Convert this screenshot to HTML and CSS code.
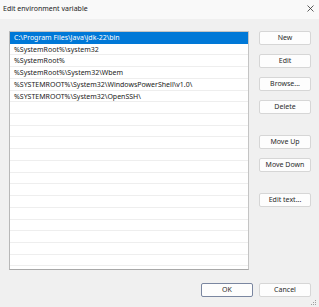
FILE: index.html
```html
<!DOCTYPE html>
<html lang="en">
<head>
    <meta charset="UTF-8">
    <title>Edit environment variable</title>
    <link rel="stylesheet" href="styles.css">
</head>
<body>
    <div class="dialog">
        <div class="titlebar">
            <span class="title">Edit environment variable</span>
            <svg class="close" width="7" height="7" viewBox="0 0 7 7">
                <path d="M0.5 0.5 L6.5 6.5 M6.5 0.5 L0.5 6.5" stroke="#333" stroke-width="0.8" fill="none"/>
            </svg>
        </div>

        <div class="content">
            <div class="main">
                <div class="path-list">
                    <div class="row selected">C:\Program Files\Java\jdk-22\bin</div>
                    <div class="row">%SystemRoot%\system32</div>
                    <div class="row">%SystemRoot%</div>
                    <div class="row">%SystemRoot%\System32\Wbem</div>
                    <div class="row">%SYSTEMROOT%\System32\WindowsPowerShell\v1.0\</div>
                    <div class="row">%SYSTEMROOT%\System32\OpenSSH\</div>
                    <div class="row"></div>
                    <div class="row"></div>
                    <div class="row"></div>
                    <div class="row"></div>
                    <div class="row"></div>
                    <div class="row"></div>
                    <div class="row"></div>
                    <div class="row"></div>
                    <div class="row"></div>
                    <div class="row"></div>
                    <div class="row"></div>
                    <div class="row"></div>
                    <div class="row"></div>
                    <div class="row"></div>
                </div>

                <div class="side-buttons">
                    <button class="btn">New</button>
                    <button class="btn">Edit</button>
                    <button class="btn">Browse...</button>
                    <button class="btn">Delete</button>
                    <button class="btn group-start">Move Up</button>
                    <button class="btn">Move Down</button>
                    <button class="btn group-start">Edit text...</button>
                </div>
            </div>

            <div class="footer">
                <button class="btn default">OK</button>
                <button class="btn">Cancel</button>
            </div>
        </div>

        <svg class="grip" width="6" height="6" viewBox="0 0 6 6">
            <rect x="4" y="0" width="1" height="1" fill="#a0a0a0"/>
            <rect x="2" y="2" width="1" height="1" fill="#a0a0a0"/>
            <rect x="4" y="2" width="1" height="1" fill="#a0a0a0"/>
            <rect x="0" y="4" width="1" height="1" fill="#a0a0a0"/>
            <rect x="2" y="4" width="1" height="1" fill="#a0a0a0"/>
            <rect x="4" y="4" width="1" height="1" fill="#a0a0a0"/>
        </svg>
    </div>
</body>
</html>
```

FILE: styles.css
```css
* {
    box-sizing: border-box;
}

body {
    margin: 0;
    background: #f0f0f0;
    font-family: "Noto Sans", "Open Sans", sans-serif;
    font-size: 7px;
    color: #1a1a1a;
}

.dialog {
    position: relative;
    width: 319px;
    height: 307px;
    background: #f0f0f0;
}

.titlebar {
    height: 19px;
    background: #f9f9f9;
    display: flex;
    align-items: center;
    justify-content: space-between;
    padding: 0 4px 2px 3px;
}

.title {
    font-size: 7px;
    color: #222;
}

.close {
    margin-right: 1px;
}

.content {
    padding: 12px 8px 0 9px;
}

.main {
    display: flex;
    gap: 10px;
}

.path-list {
    width: 240px;
    height: 239px;
    background: #fff;
    border: 1px solid #c4c4c4;
    border-left-color: #b8b8b8;
    border-bottom-color: #a8a8a8;
    overflow: hidden;
}

.row {
    height: 11.72px;
    line-height: 11px;
    padding-left: 4px;
    border-bottom: 1px solid #eeeeee;
    white-space: nowrap;
}

.row.selected {
    background: #0078d7;
    color: #fff;
    border-bottom-color: #0078d7;
}

.side-buttons {
    display: flex;
    flex-direction: column;
    gap: 9px;
}

.btn {
    width: 52px;
    height: 14px;
    padding: 0;
    background: #fdfdfd;
    border: 1px solid #d6d6d6;
    border-radius: 2px;
    font-family: "Noto Sans", "Open Sans", sans-serif;
    font-size: 7px;
    color: #2a2a2a;
    line-height: 12px;
}

.group-start {
    margin-top: 12px;
}

.footer {
    display: flex;
    justify-content: flex-end;
    gap: 6px;
    margin-top: 13px;
}

.btn.default {
    border-color: #7a86a0;
}

.grip {
    position: absolute;
    right: 2px;
    bottom: 1px;
}
```
